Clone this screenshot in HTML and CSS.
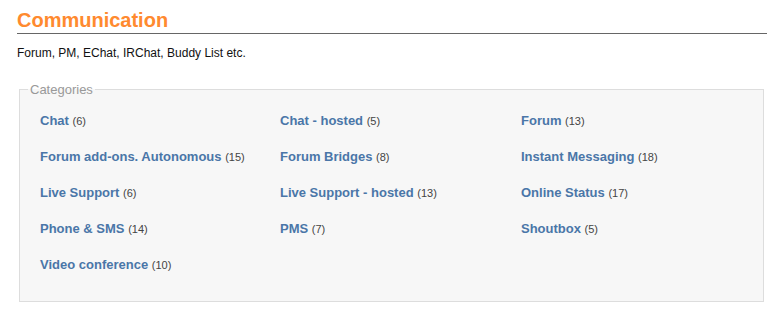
FILE: index.html
```html
<!DOCTYPE html>
<html lang="en">
<head>
    <meta charset="UTF-8">
    <meta name="viewport" content="width=device-width, initial-scale=1.0">
    <title>Communication</title>
    <link rel="stylesheet" href="styles.css">
</head>
<body>
    <div class="page">
        <h1 class="section-title">Communication</h1>
        <div class="section-description">Forum, PM, EChat, IRChat, Buddy List etc.</div>

        <fieldset class="categories">
            <legend>Categories</legend>
            <ul class="category-list">
                <li><a href="#">Chat</a> <span class="count">(6)</span></li>
                <li><a href="#">Chat - hosted</a> <span class="count">(5)</span></li>
                <li><a href="#">Forum</a> <span class="count">(13)</span></li>
                <li><a href="#">Forum add-ons. Autonomous</a> <span class="count">(15)</span></li>
                <li><a href="#">Forum Bridges</a> <span class="count">(8)</span></li>
                <li><a href="#">Instant Messaging</a> <span class="count">(18)</span></li>
                <li><a href="#">Live Support</a> <span class="count">(6)</span></li>
                <li><a href="#">Live Support - hosted</a> <span class="count">(13)</span></li>
                <li><a href="#">Online Status</a> <span class="count">(17)</span></li>
                <li><a href="#">Phone &amp; SMS</a> <span class="count">(14)</span></li>
                <li><a href="#">PMS</a> <span class="count">(7)</span></li>
                <li><a href="#">Shoutbox</a> <span class="count">(5)</span></li>
                <li><a href="#">Video conference</a> <span class="count">(10)</span></li>
            </ul>
        </fieldset>
    </div>
</body>
</html>
```

FILE: styles.css
```css
body {
    font-family: "Liberation Sans", Arial, sans-serif;
    margin: 0;
    padding: 0;
    background-color: #fff;
}
.page {
    padding: 9px 13px 0 17px;
}
.section-title {
    margin: 0;
    padding-bottom: 1px;
    font-size: 20px;
    line-height: 23px;
    font-weight: bold;
    color: #ff8a2f;
    border-bottom: 1px solid #666;
}
.section-description {
    margin-top: 12px;
    font-size: 12px;
    line-height: 14px;
    color: #111;
}
.categories {
    min-width: 0;
    margin: 22px 3px 0 2px;
    padding: 0 8px 18px;
    border: 1px solid #ddd;
    background: #f7f7f7;
}
.categories legend {
    padding: 0 2px;
    font-size: 13px;
    line-height: 15px;
    color: #999;
}
.category-list {
    list-style: none;
    margin: 0;
    padding: 6px 0 0 12px;
    display: grid;
    grid-template-columns: 240px 241px 1fr;
}
.category-list li {
    line-height: 36px;
    font-size: 13px;
    white-space: nowrap;
}
.category-list a {
    color: #4a76a8;
    font-weight: bold;
    text-decoration: none;
}
.category-list a:hover {
    text-decoration: underline;
}
.count {
    font-size: 11px;
    color: #444;
}
```
